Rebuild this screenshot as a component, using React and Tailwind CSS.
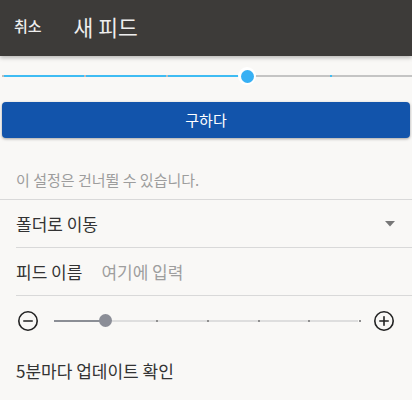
import React from "react";

const font = { fontFamily: '"Noto Sans CJK KR", Roboto, "Noto Sans", sans-serif' };

const topTicks = [0, 82, 164, 328, 410];
const bottomTicks = [102, 153, 204, 254, 305];

const StepBar = () => {
  return (
    <div className="h-10 flex items-center">
      <div className="relative ml-[2px] w-[410px] h-[2px] bg-[#c4c4c4]">
        <div className="absolute left-0 top-0 h-[2px] w-[245px] bg-[#3fbcf3]" />
        {topTicks.map((t) => (
          <div
            key={t}
            className={
              t < 245
                ? "absolute top-0 w-[2px] h-[2px] bg-[#bdbdbd]"
                : "absolute top-0 w-[2px] h-[2px] bg-[#3fbcf3]"
            }
            style={{ left: t }}
          />
        ))}
        <div className="absolute left-[236px] top-[-8px] w-[18px] h-[18px] rounded-full bg-white flex items-center justify-center">
          <div className="w-[13px] h-[13px] rounded-full bg-[#37b0f4]" />
        </div>
      </div>
    </div>
  );
};

const CircleIcon = ({ plus }) => (
  <svg width="22" height="22" viewBox="0 0 22 22" fill="none" stroke="#222" strokeWidth="1.6">
    <circle cx="11" cy="11" r="9.2" />
    <line x1="6.8" y1="11" x2="15.2" y2="11" strokeLinecap="round" />
    {plus && <line x1="11" y1="6.8" x2="11" y2="15.2" strokeLinecap="round" />}
  </svg>
);

const IntervalSlider = () => {
  return (
    <div className="h-[50px] flex items-center pl-[17px] pr-[17px]">
      <CircleIcon />
      <div className="relative mx-[15px] flex-1 h-[2px] bg-[#dedede]">
        <div className="absolute left-0 top-0 h-[2px] w-[51px] bg-[#8b8e95]" />
        {bottomTicks.map((t) => (
          <div key={t} className="absolute top-0 w-[2px] h-[2px] bg-[#8f8f8f]" style={{ left: t }} />
        ))}
        <div className="absolute left-[45px] top-[-6px] w-[13px] h-[13px] rounded-full bg-[#8b8e97]" />
      </div>
      <CircleIcon plus />
    </div>
  );
};

export default function App() {
  return (
    <div className="w-[412px] h-[400px] overflow-hidden bg-[#f9f8f6] text-[#333333]" style={font}>
      <div className="h-14 bg-[#3d3b39] flex items-center shadow-[0_2px_4px_rgba(0,0,0,0.25)] relative z-10">
        <span className="ml-[14px] text-[15px] font-medium text-[#eeeeee] -mt-[3px]">취소</span>
        <span className="ml-[32px] text-[21.5px] text-[#eeeeee] -mt-[2px]">새 피드</span>
      </div>
      <StepBar />
      <div className="px-[2px] mt-[6px]">
        <button className="w-full h-9 rounded bg-[#1254ab] text-white text-[15px] shadow-[0_1px_3px_rgba(0,0,0,0.35)]">
          구하다
        </button>
      </div>
      <div className="h-[62px] pt-[32px] pl-4 border-b border-[#d9d9d9] text-[15px] leading-5 text-[#9d9d9d]">
        이 설정은 건너뛸 수 있습니다.
      </div>
      <div className="ml-4 h-12 flex items-center justify-between border-b border-[#d9d9d9]">
        <span className="text-[17px]">폴더로 이동</span>
        <svg width="10" height="6" viewBox="0 0 10 6" className="mr-[17px]">
          <polygon points="0,0 10,0 5,5.5" fill="#777" />
        </svg>
      </div>
      <div className="ml-4 h-12 flex items-center border-b border-[#d9d9d9]">
        <span className="text-[17px]">피드 이름</span>
        <span className="ml-[19px] text-[17px] text-[#9e9e9e]">여기에 입력</span>
      </div>
      <IntervalSlider />
      <div className="pl-4 pt-[12px] text-[17px]">5분마다 업데이트 확인</div>
    </div>
  );
}
